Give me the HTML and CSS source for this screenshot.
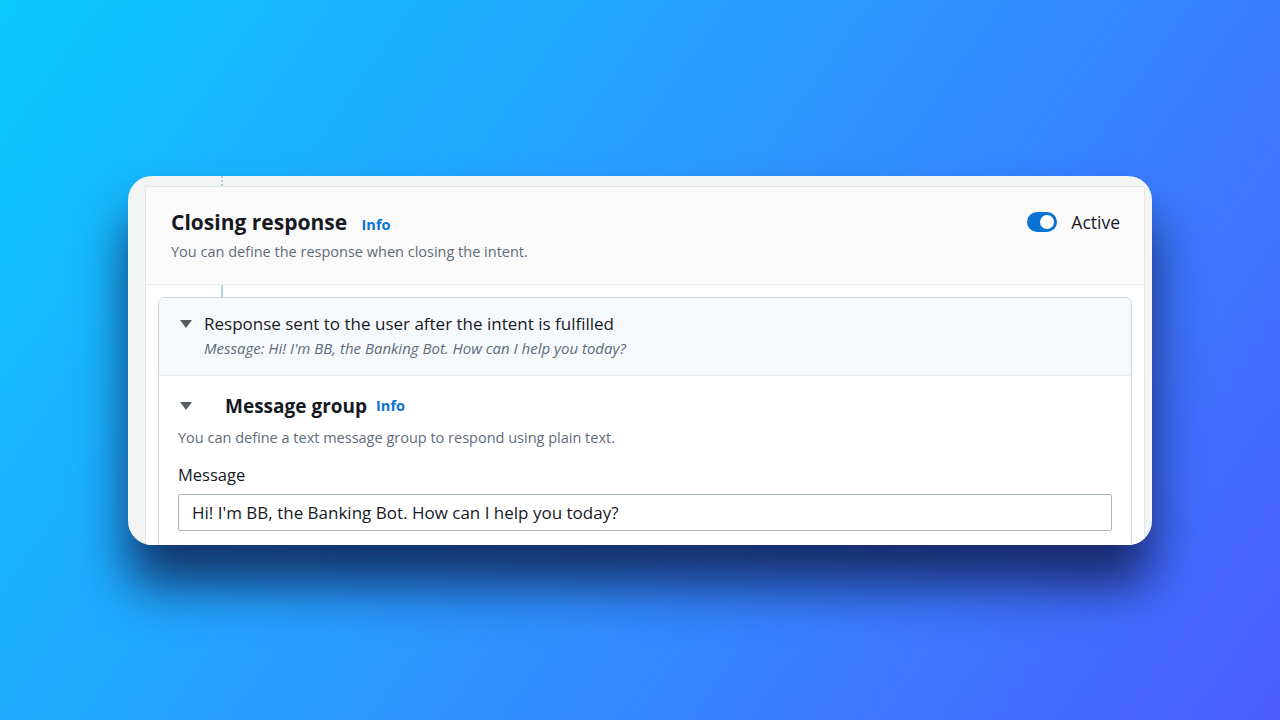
FILE: index.html
```html
<!DOCTYPE html>
<html lang="en">
<head>
<meta charset="utf-8">
<title>Closing response</title>
<link rel="stylesheet" href="styles.css">
</head>
<body>
<div class="card">
  <div class="dots"></div>
  <div class="panel">
    <div class="panel-head">
      <div class="head-text">
        <h2 class="title">Closing response <a class="info" href="#">Info</a></h2>
        <p class="desc">You can define the response when closing the intent.</p>
      </div>
      <div class="toggle-wrap">
        <span class="toggle"><span class="knob"></span></span>
        <span class="toggle-label">Active</span>
      </div>
    </div>
    <div class="panel-body">
      <div class="connector"></div>
      <div class="nested">
        <div class="nested-head">
          <div class="row">
            <svg class="caret" width="12" height="8" viewBox="0 0 12 8"><path d="M0 0 H12 L6 8 Z" fill="#545b64"/></svg>
            <span class="nested-title">Response sent to the user after the intent is fulfilled</span>
          </div>
          <div class="nested-sub">Message: Hi! I'm BB, the Banking Bot. How can I help you today?</div>
        </div>
        <div class="group">
          <div class="row group-row">
            <svg class="caret" width="12" height="8" viewBox="0 0 12 8"><path d="M0 0 H12 L6 8 Z" fill="#545b64"/></svg>
            <span class="group-title">Message group</span>
            <a class="info" href="#">Info</a>
          </div>
          <p class="group-desc">You can define a text message group to respond using plain text.</p>
          <label class="label">Message</label>
          <div class="input">Hi! I'm BB, the Banking Bot. How can I help you today?</div>
        </div>
      </div>
    </div>
  </div>
</div>
</body>
</html>
```

FILE: styles.css
```css
* { box-sizing: border-box; }
html, body { margin: 0; padding: 0; }
body {
  width: 1280px;
  height: 720px;
  overflow: hidden;
  background: linear-gradient(125deg, #0bc9ff 0%, #2a9bff 45%, #4a5cff 100%);
  display: flex;
  align-items: center;
  justify-content: center;
  font-family: "Open Sans", "Noto Sans", sans-serif;
  color: #16191f;
}
.card {
  width: 1024px;
  height: 369px;
  background: #f2f3f3;
  border-radius: 24px;
  overflow: hidden;
  padding: 0 7px 0 17px;
  box-shadow: 0 40px 50px rgba(14, 24, 70, 0.8);
}
.dots {
  height: 10px;
  margin-left: 76px;
  border-left: 2px dotted #a9d6e5;
}
.panel {
  background: #fff;
  border: 1px solid #e3e6e8;
  border-bottom: none;
  height: 400px;
}
.panel-head {
  background: #fafafa;
  border-bottom: 1px solid #e9ebed;
  padding: 22px 24px 22px 25px;
  display: flex;
  justify-content: space-between;
  align-items: flex-start;
}
.title {
  margin: 0;
  font-size: 21px;
  line-height: 26px;
  font-weight: 700;
}
.info {
  color: #0972d3;
  font-size: 14.5px;
  font-weight: 700;
  text-decoration: none;
  margin-left: 9px;
}
.desc {
  margin: 4px 0 0;
  font-size: 14.5px;
  line-height: 20px;
  color: #5f6b7a;
}
.toggle-wrap {
  display: flex;
  align-items: center;
  gap: 14px;
  margin-top: 2px;
}
.toggle {
  width: 30px;
  height: 20px;
  border-radius: 10px;
  background: #0972d3;
  display: flex;
  align-items: center;
  justify-content: flex-end;
  padding-right: 3px;
}
.knob {
  width: 14px;
  height: 14px;
  border-radius: 50%;
  background: #fff;
}
.toggle-label {
  font-size: 17.5px;
  line-height: 22px;
}
.panel-body {
  padding: 0 12px;
}
.connector {
  height: 12px;
  margin-left: 63px;
  border-left: 2px solid #a6dbe6;
}
.nested {
  border: 1px solid #d1d5db;
  border-radius: 6px;
  overflow: hidden;
}
.nested-head {
  background: #f6f9fc;
  border-bottom: 1px solid #e9ebed;
  padding: 14px 20px 17px 21px;
}
.row {
  display: flex;
  align-items: center;
}
.caret { flex: none; }
.nested-title {
  margin-left: 12px;
  font-size: 17px;
  line-height: 24px;
}
.nested-sub {
  margin: 2px 0 0 24px;
  font-size: 15px;
  line-height: 20px;
  font-style: italic;
  color: #5f6b7a;
}
.group {
  padding: 18px 19px 20px 19px;
}
.group-row { padding-left: 2px; }
.group-title {
  margin-left: 33px;
  font-size: 19px;
  line-height: 24px;
  font-weight: 700;
}
.group-desc {
  margin: 10px 0 0;
  font-size: 14.5px;
  line-height: 20px;
  color: #5f6b7a;
}
.label {
  display: block;
  margin-top: 16px;
  font-size: 16.5px;
  line-height: 22px;
}
.input {
  margin-top: 8px;
  height: 37px;
  border: 1px solid #aab7b8;
  border-radius: 2px;
  padding: 0 13px;
  font-size: 17px;
  line-height: 35px;
}
```
